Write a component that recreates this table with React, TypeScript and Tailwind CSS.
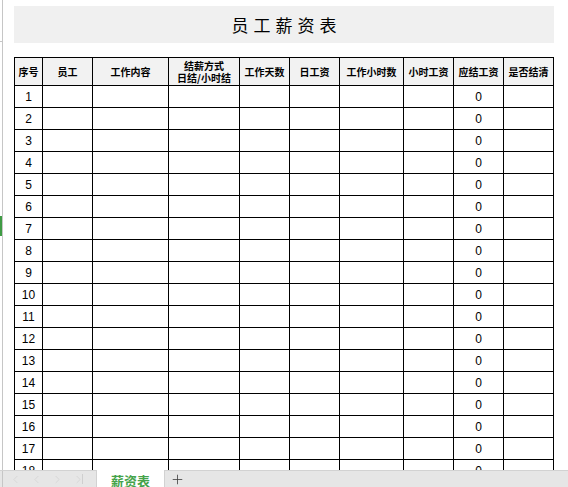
import { ChevronLeft, ChevronRight, Plus } from 'lucide-react'

const columns = [
  { label: '序号', w: 'w-[27px]' },
  { label: '员工', w: 'w-[49px]' },
  { label: '工作内容', w: 'w-[75px]' },
  { label: '结薪方式\n日结/小时结', w: 'w-[70px]' },
  { label: '工作天数', w: 'w-[49px]' },
  { label: '日工资', w: 'w-[49px]' },
  { label: '工作小时数', w: 'w-[63px]' },
  { label: '小时工资', w: 'w-[49px]' },
  { label: '应结工资', w: 'w-[49px]' },
  { label: '是否结清', w: 'w-[49px]' },
]

const rows = Array.from({ length: 18 }, (_, i) => i + 1)

const cjk = "font-['Noto_Sans_CJK_SC',sans-serif]"
const num = "font-['Liberation_Sans',Arial,sans-serif]"

export default function App() {
  return (
    <div className="flex flex-col h-[487px] w-[568px] overflow-hidden bg-white text-black">
      <div className="flex flex-1 min-h-0 overflow-hidden">
        {/* row header remnant */}
        <div className="flex flex-col w-[3px] border-r border-[#c6c6c6] shrink-0">
          <div className="h-[42px] shrink-0 border-b border-[#c6c6c6]" />
          <div className="h-[174px] shrink-0" />
          <div className="h-[20px] shrink-0 bg-[#3f9b44]" />
        </div>

        <div className="flex flex-col pl-[11px] pt-[6px]">
          <div className="flex shrink-0 items-center justify-center w-[540px] h-[37px] bg-[#f0f0f0]">
            <span className={`${cjk} text-[17px] tracking-[5px] pl-[5px] leading-none`}>员工薪资表</span>
          </div>

          <div className="mt-[14px] shrink-0 grid grid-cols-[27px_49px_75px_70px_49px_49px_63px_49px_49px_49px] gap-px bg-black p-px w-[540px]">
            {columns.map((c) => (
              <div
                key={c.label}
                className={`${c.w} h-[27px] bg-[#f2f2f2] flex items-center justify-center text-center whitespace-pre-line ${cjk} font-bold text-[10px] leading-[12px]`}
              >
                {c.label}
              </div>
            ))}
            {rows.map((r) => (
              <Row key={r} n={r} />
            ))}
          </div>
        </div>
      </div>

      {/* sheet tabs */}
      <div className="flex h-[17px] shrink-0 bg-[#e6e6e6] border-t border-[#d2d2d2]">
        <div className="flex items-center w-[97px] text-[#cfcfcf] border-r border-[#d2d2d2]">
          <span className="w-[3px] h-full border-r border-[#c6c6c6]" />
          <div className="flex items-center gap-[8px] pl-[6px]">
            <ChevronLeft size={13} strokeWidth={1.2} />
            <ChevronLeft size={13} strokeWidth={1.2} />
            <ChevronRight size={13} strokeWidth={1.2} />
            <div className="flex items-center">
              <ChevronRight size={13} strokeWidth={1.2} />
              <span className="w-px h-[10px] bg-[#cfcfcf] -ml-[3px]" />
            </div>
          </div>
        </div>
        <div className="flex justify-center w-[68px] bg-white border-r border-[#d2d2d2] -mt-px">
          <span className={`${cjk} font-bold text-[13px] leading-none pt-[4px] text-[#45a34a]`}>薪资表</span>
        </div>
        <div className="flex items-start pl-[5px] pt-[1px] text-[#404040]">
          <Plus size={15} strokeWidth={1.3} />
        </div>
      </div>
    </div>
  )
}

function Row({ n }: { n: number }) {
  const cell = 'h-[21px] bg-white flex items-center justify-center'
  return (
    <>
      <div className={`${cell} ${num} text-[12px]`}>{n}</div>
      <div className={cell} />
      <div className={cell} />
      <div className={cell} />
      <div className={cell} />
      <div className={cell} />
      <div className={cell} />
      <div className={cell} />
      <div className={`${cell} ${num} text-[12px]`}>0</div>
      <div className={cell} />
    </>
  )
}
